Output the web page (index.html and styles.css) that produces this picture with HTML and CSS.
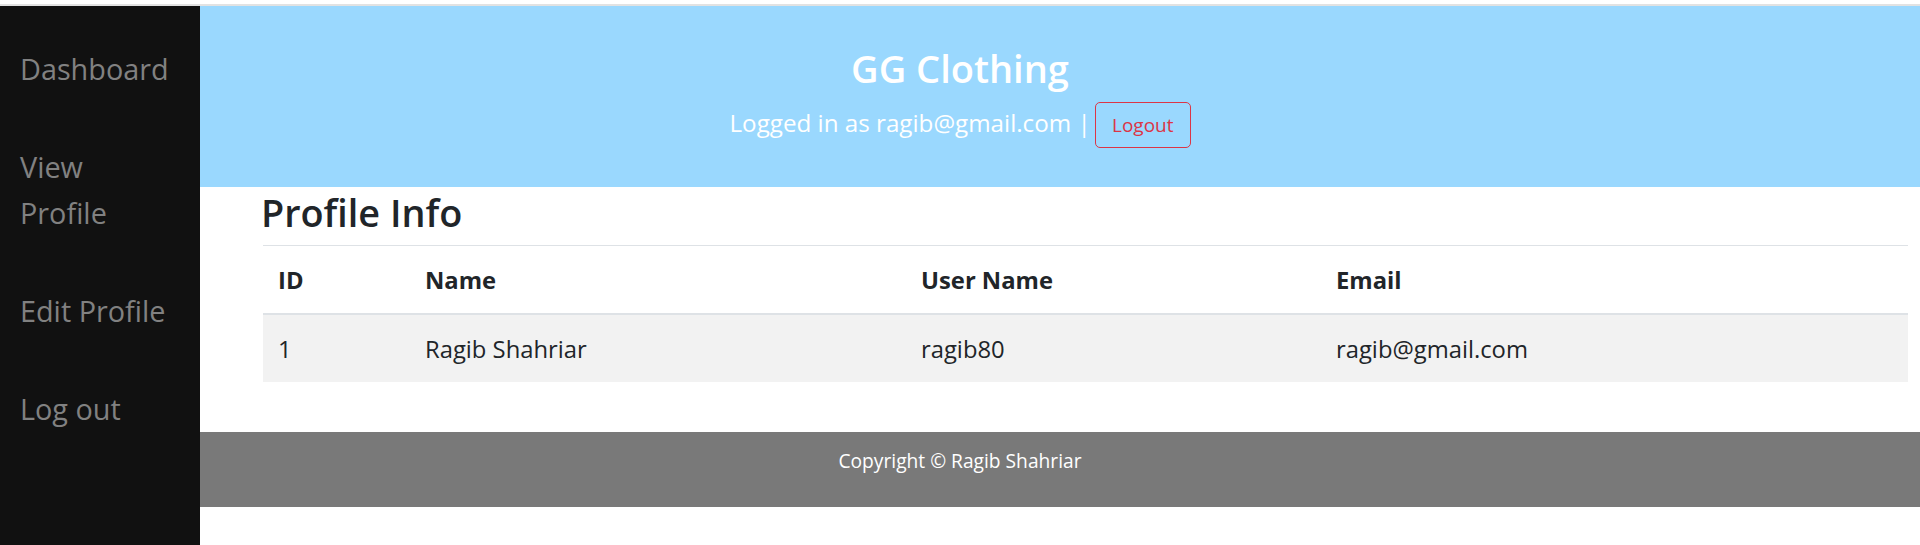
FILE: index.html
```html
<!DOCTYPE html>
<html lang="en">
<head>
<meta charset="utf-8">
<title>GG Clothing - Profile Info</title>
<link rel="stylesheet" href="styles.css">
</head>
<body>
<div class="page">
  <nav class="sidenav">
    <a href="#">Dashboard</a>
    <a href="#">View Profile</a>
    <a href="#">Edit Profile</a>
    <a href="#">Log out</a>
  </nav>
  <header class="site-header">
    <h1 class="brand">GG Clothing</h1>
    <p class="login">Logged in as ragib@gmail.com | <a class="btn-logout" href="#">Logout</a></p>
  </header>
  <main class="content">
    <h2 class="title">Profile Info</h2>
    <table class="profile">
      <thead>
        <tr><th class="c-id">ID</th><th class="c-name">Name</th><th class="c-user">User Name</th><th>Email</th></tr>
      </thead>
      <tbody>
        <tr><td>1</td><td>Ragib Shahriar</td><td>ragib80</td><td>ragib@gmail.com</td></tr>
      </tbody>
    </table>
  </main>
  <footer class="site-footer"><p>Copyright © Ragib Shahriar</p></footer>
</div>
</body>
</html>
```
FILE: styles.css
```css
* { box-sizing: border-box; }
html, body { margin: 0; }
body {
  padding-top: 4px;
  background: #fff;
  font-family: "Open Sans", "Noto Sans", sans-serif;
  color: #212529;
}
.page { border-top: 2px solid #e2e2e2; }

.sidenav {
  position: fixed;
  top: 6px;
  left: 0;
  bottom: 0;
  width: 200px;
  background: #111;
  padding-top: 14px;
  display: flex;
  flex-direction: column;
}
.sidenav a {
  display: block;
  padding: 26px 28px 26px 20px;
  font-size: 28.8px;
  line-height: 46px;
  color: #818181;
  text-decoration: none;
}

.site-header {
  background: #9ad8fe;
  padding: 39px 0;
  text-align: center;
  color: #fff;
}
.brand {
  margin: 0 0 11px;
  font-size: 38px;
  line-height: 46px;
  font-weight: 600;
}
.login {
  margin: 0;
  font-size: 24.2px;
  line-height: 32px;
}
.btn-logout {
  display: inline-block;
  margin-left: -2px;
  padding: 8px 16px;
  font-size: 19px;
  line-height: 28px;
  color: #dc3545;
  border: 1px solid #dc3545;
  border-radius: 5px;
  text-decoration: none;
}

.content { padding: 0 12px 50px 263px; }
.title {
  margin: 2.5px 0 10px -2px;
  font-size: 37.8px;
  line-height: 45.6px;
  font-weight: 600;
}
.profile {
  width: 100%;
  border-collapse: separate;
  border-spacing: 0;
  table-layout: fixed;
  font-size: 23.8px;
  line-height: 37px;
}
.profile th, .profile td {
  text-align: left;
  vertical-align: top;
  padding: 16px 15px 14px;
}
.profile th {
  font-weight: 700;
  border-top: 1px solid #dee2e6;
  border-bottom: 2px solid #dee2e6;
}
.profile tbody tr { background: #f2f2f2; }
.c-id { width: 147px; }
.c-name { width: 496px; }
.c-user { width: 415px; }

.site-footer {
  background: #797979;
  color: #fff;
  text-align: center;
  padding: 13.5px 0 32.5px;
}
.site-footer p {
  margin: 0;
  font-size: 19.2px;
  line-height: 29px;
}
```
